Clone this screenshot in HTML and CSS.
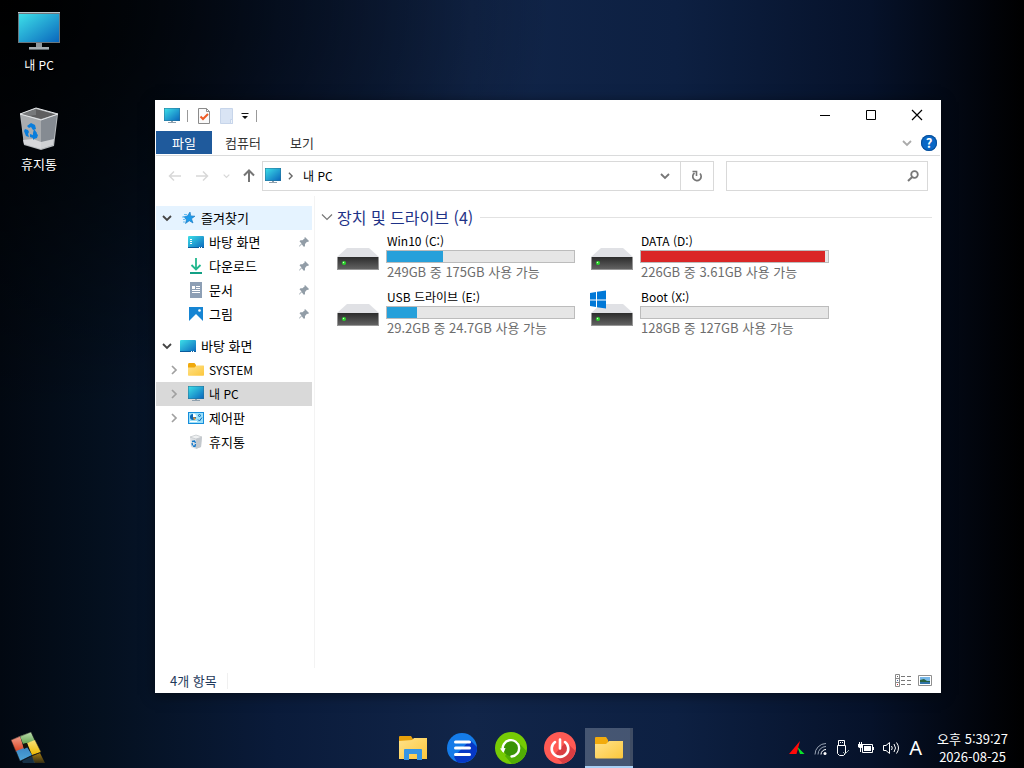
FILE: index.html
```html
<!DOCTYPE html>
<html lang="ko">
<head>
<meta charset="utf-8">
<title>내 PC</title>
<link rel="stylesheet" href="styles.css">
</head>
<body>
<svg class="defs" aria-hidden="true">
  <defs>
    <linearGradient id="screen" x1="0" y1="0" x2="1" y2="1"><stop offset="0" stop-color="#3ddfe8"/><stop offset="1" stop-color="#0a67bd"/></linearGradient>
    <linearGradient id="gold" x1="0" y1="0" x2="1" y2="1"><stop offset="0" stop-color="#ffe28a"/><stop offset="1" stop-color="#fcc73c"/></linearGradient>
    <linearGradient id="metal" x1="0" y1="0" x2="0" y2="1"><stop offset="0" stop-color="#2c2c2c"/><stop offset="1" stop-color="#626262"/></linearGradient>
    <linearGradient id="red" x1="0" y1="0" x2="0" y2="1"><stop offset="0" stop-color="#f2a08c"/><stop offset="1" stop-color="#d8401f"/></linearGradient>
    <linearGradient id="green" x1="0" y1="0" x2="0" y2="1"><stop offset="0" stop-color="#bfe0b0"/><stop offset="1" stop-color="#63a350"/></linearGradient>
    <linearGradient id="blue" x1="0" y1="0" x2="0" y2="1"><stop offset="0" stop-color="#3b86c4"/><stop offset="1" stop-color="#4fa5d8"/></linearGradient>
    <linearGradient id="yellow" x1="0" y1="0" x2="0" y2="1"><stop offset="0" stop-color="#fae27a"/><stop offset="1" stop-color="#ebb800"/></linearGradient>
    <linearGradient id="fade" x1="0" y1="0" x2="0" y2="1"><stop offset="0" stop-color="#a57c10"/><stop offset="1" stop-color="#a57c10" stop-opacity=".3"/></linearGradient>
  </defs>
  <symbol id="i-pc" viewBox="0 0 16 16"><path d="M0 0h16v13H0z" fill="#2a6f92"/><path d="M.5.5h15v12H.5z" fill="url(#screen)"/><path d="M7 13h2v2H7zM4 14h8v1H4z" fill="#8fa0ad"/></symbol>
  <symbol id="i-desk" viewBox="0 0 16 16"><path d="M0 3q0-1 1-1h14q1 0 1 1v11H1q-1 0-1-1z" fill="url(#screen)"/><path d="M0 13h16v1H0z" fill="#0a5c9c"/><path d="M11 13h1v1h-1zM13 13h1v1h-1z" fill="#fff"/></symbol>
  <symbol id="i-folder" viewBox="0 0 16 16"><path d="M0 2.500q0-1.500 1-1.500h5.500l1.500 2v3H0z" fill="#f0a90c"/><path d="M0 5.500h6.500L8.500 3.500H15.500q.5 0 .5.500v9q0 .7-.7.700H.7Q0 13.700 0 13z" fill="url(#gold)"/></symbol>
  <symbol id="i-pin" viewBox="0 0 12 12"><path d="M7 1l4 4-1 1-1-.2L7 8v2L6 11 3.700 8.300 1.500 10.500 1 11l.5-1.500L3.500 7.500 1.500 5.300l1-1h2l2.300-2L6.500 1.500z" fill="#929da7"/></symbol>
  <symbol id="i-right" viewBox="0 0 8 10"><path d="M2 1l4 4-4 4" fill="none" stroke="currentColor" stroke-width="1.700"/></symbol>
  <symbol id="i-down" viewBox="0 0 10 8"><path d="M1 2l4 4 4-4" fill="none" stroke="currentColor" stroke-width="1.800"/></symbol>
  <symbol id="i-thin" viewBox="0 0 12 8"><path d="M1 1.500l5 5 5-5" fill="none" stroke="currentColor" stroke-width="1.200"/></symbol>
  <symbol id="i-drive" viewBox="0 0 44 34"><path d="M11 11h22l10 9H1z" fill="#e0e1e5"/><path d="M1 20h42v13H1z" fill="#979797"/><path d="M2 20h40v12H2z" fill="url(#metal)"/><circle cx="8" cy="26" r="2" fill="#29d629"/><circle cx="7.500" cy="25.500" r=".7" fill="#c6ffc6"/></symbol>
  <symbol id="i-bin" viewBox="0 0 40 44"><path d="M1 7L17 1l22 6-4 32-13 4-17-5z" fill="#b6babd"/><path d="M2 7l15-5 20 5.500-15 4.500z" fill="#5f5f60"/><path d="M17 2v6L8 9 2 7z" fill="#77797b"/><path d="M2 8l20 5v29L5 37z" fill="#a9acaf"/><path d="M22 13l16-5-4 30-12 4z" fill="#858b92"/><path d="M4 33l10-1 8 3 13-3-1 6-12 4-17-5z" fill="#e2e4e6" opacity=".8"/><path d="M1 7l21 6 17-6M1 7l16-6 22 6" fill="none" stroke="#e3e5e7"/><path d="M8 19l4-3 4 2 1 4-3 1-2-3-2 1zM6 22l3 1 1 2-1 2 1 3-3-1-2-5zM11 27l3 1v-2l3 4-3 3v-2l-3-1zM15 22l3 4-1 4-3-4zM17 26l2 2-1 3-3 1z" fill="#087ddc"/></symbol>
  <symbol id="i-bin-small" viewBox="0 0 16 16"><path d="M2 3l6-2 6 2-1 10-5 2-5-2z" fill="#dde0e3"/><path d="M2 3l6 2 6-2-6-2z" fill="#eff1f2" stroke="#bcc1c5" stroke-width=".6"/><path d="M8 5l6-2-1 10-5 2z" fill="#c3c8cd"/><path d="M4 7.500l2.500-.5 1 2M4 9l.5 2.500M7.500 10l-.5 2.500-2-.5" fill="none" stroke="#1377c9" stroke-width="1.300"/></symbol>
</svg>

<main class="desktop">
  <div class="shortcuts">
    <a class="shortcut latin" href="#pc">
      <svg width="42" height="42" viewBox="0 0 42 42"><path d="M0 2h42v31H0z" fill="#6b777e"/><path d="M0 2h42v1H0z" fill="#b9c4c9"/><path d="M1 4h40v28H1z" fill="url(#screen)"/><path d="M18 33h6v4h-6z" fill="#8f979c"/><path d="M11 37h20v3H11z" fill="#a5adb2"/><path d="M11 39h20v1H11z" fill="#5d666b"/></svg>
      <span>내 PC</span>
    </a>
    <a class="shortcut" href="#bin">
      <svg width="40" height="44"><use href="#i-bin"/></svg>
      <span>휴지통</span>
    </a>
  </div>

  <section class="window" aria-label="내 PC">
    <header class="titlebar">
      <div class="quick">
        <svg width="16" height="16"><use href="#i-pc"/></svg>
        <i class="bar-sep"></i>
        <button class="spaced" aria-label="속성"><svg width="14" height="16" viewBox="0 0 14 16"><path d="M1.500.5h8l3 3v12h-11z" fill="#fafafa" stroke="#8b8b8b"/><path d="M9.500.5v3h3" fill="none" stroke="#8b8b8b"/><path d="M3.500 8.500L6 11l5-5" fill="none" stroke="#ee5a24" stroke-width="2"/></svg></button>
        <button class="spaced" aria-label="새 폴더"><svg width="14" height="16" viewBox="0 0 14 16"><path d="M.5.5h12v15H.5z" fill="#d9e4f4" stroke="#c7d5ea"/><path d="M10.500 15.500v-4h2v4z" fill="#edf3fb" stroke="#c7d5ea"/></svg></button>
        <button aria-label="사용자 지정"><svg width="8" height="8" viewBox="0 0 8 8"><path d="M.5 1h7v1h-7zM1 4h6L4 7z" fill="#111"/></svg></button>
        <i class="bar-sep"></i>
      </div>
      <div class="controls">
        <button aria-label="최소화"><svg width="12" height="12"><path d="M1 6.500h10" stroke="#000"/></svg></button>
        <button aria-label="최대화"><svg width="12" height="12"><path d="M1.500 1.500h9v9h-9z" fill="none" stroke="#000"/></svg></button>
        <button aria-label="닫기"><svg width="12" height="12"><path d="M1 1l10 10M11 1L1 11" stroke="#000" stroke-width="1.200"/></svg></button>
      </div>
    </header>

    <div class="ribbon">
      <button class="tab tab-file">파일</button>
      <button class="tab">컴퓨터</button>
      <button class="tab">보기</button>
      <div class="ribbon-end">
        <button class="muted" aria-label="리본 확장"><svg width="10" height="8"><use href="#i-down"/></svg></button>
        <button class="help" aria-label="도움말">?</button>
      </div>
    </div>

    <div class="toolbar">
      <div class="history">
        <button class="faint" aria-label="뒤로"><svg width="14" height="12" viewBox="0 0 14 12"><path d="M13 6H1.500M6 1.500L1.500 6 6 10.500" fill="none" stroke="currentColor" stroke-width="1.500"/></svg></button>
        <button class="faint" aria-label="앞으로"><svg width="14" height="12" viewBox="0 0 14 12"><path d="M1 6h11.500M8 1.500L12.500 6 8 10.500" fill="none" stroke="currentColor" stroke-width="1.500"/></svg></button>
        <button class="faint" aria-label="최근 위치"><svg width="7" height="6"><use href="#i-down"/></svg></button>
        <button class="up" aria-label="위로"><svg width="12" height="14" viewBox="0 0 12 14"><path d="M6 13V2M1 6.500l5-5 5 5" fill="none" stroke="currentColor" stroke-width="2"/></svg></button>
      </div>
      <div class="address">
        <svg width="16" height="16"><use href="#i-pc"/></svg>
        <svg class="crumb-arrow" width="7" height="8"><use href="#i-right"/></svg>
        <button class="latin">내 PC</button>
        <button class="drop" aria-label="이전 위치"><svg width="10" height="8"><use href="#i-down"/></svg></button>
        <button class="refresh" aria-label="새로 고침"><svg width="12" height="12" viewBox="0 0 12 12"><path d="M3.500 3A4.200 4.200 0 1 0 9 3.500" fill="none" stroke="currentColor" stroke-width="1.700"/><path d="M1.500 1.500H5.500V6" fill="none" stroke="currentColor" stroke-width="1.600"/></svg></button>
      </div>
      <label class="search">
        <input type="search" aria-label="내 PC 검색">
        <svg width="12" height="12" viewBox="0 0 12 12"><circle cx="7.500" cy="4.500" r="3.300" fill="none" stroke="#777" stroke-width="1.800"/><path d="M5.200 7L1 11" stroke="#777" stroke-width="2"/></svg>
      </label>
    </div>

    <div class="body">
      <nav class="tree">
        <ul>
          <li><a class="node hot" href="#fav"><svg class="open" width="10" height="8"><use href="#i-down"/></svg><svg width="16" height="16" viewBox="0 0 16 16"><path d="M10 2l.8 3.900 4.200.3-3.500 2.500 1.500 4.300-3.700-2.200L5.500 13.500 6.500 9.500 3.500 6.700l3.900-.7z" fill="#1d9bea" stroke="#1573bd" stroke-width=".6"/><path d="M4 4.500h3M2 7h3M3 9.500h2.500M3 12h2" stroke="#68bdf1"/></svg><span>즐겨찾기</span></a></li>
          <li><a class="node child" href="#desktop"><svg width="16" height="16"><use href="#i-desk"/><path d="M2 5h2v1H2zM2 7h2v1H2zM2 9h2v1H2z" fill="#fff"/></svg><span>바탕 화면</span><svg class="pin" width="12" height="12"><use href="#i-pin"/></svg></a></li>
          <li><a class="node child" href="#down"><svg width="16" height="16" viewBox="0 0 16 16"><path d="M8 0v11M3.500 7L8 11.500 12.500 7" fill="none" stroke="#22b88e" stroke-width="1.800"/><path d="M2 14h12v2H2z" fill="#12a085"/></svg><span>다운로드</span><svg class="pin" width="12" height="12"><use href="#i-pin"/></svg></a></li>
          <li><a class="node child" href="#docs"><svg width="16" height="16" viewBox="0 0 16 16"><path d="M2 0h12v16H2z" fill="#8d9fb5"/><path d="M4 4h3v3H4zM8 4h4v1H8zM8 6h4v1H8zM4 8h8v1H4zM4 10h8v1H4z" fill="#fff"/></svg><span>문서</span><svg class="pin" width="12" height="12"><use href="#i-pin"/></svg></a></li>
          <li><a class="node child" href="#pics"><svg width="16" height="16" viewBox="0 0 16 16"><path d="M1 1h14v14H1z" fill="#1685d3"/><path d="M1 15l7-7 7 7z" fill="#fff"/><circle cx="11.500" cy="4.500" r="1.300" fill="#fff"/></svg><span>그림</span><svg class="pin" width="12" height="12"><use href="#i-pin"/></svg></a></li>
        </ul>
        <ul>
          <li><a class="node" href="#root"><svg class="open" width="10" height="8"><use href="#i-down"/></svg><svg width="16" height="16"><use href="#i-desk"/></svg><span>바탕 화면</span></a></li>
          <li><a class="node sub latin" href="#system"><svg class="closed" width="8" height="10"><use href="#i-right"/></svg><svg width="16" height="16"><use href="#i-folder"/></svg><span>SYSTEM</span></a></li>
          <li><a class="node sub latin selected" href="#pc" aria-current="page"><svg class="closed" width="8" height="10"><use href="#i-right"/></svg><svg width="16" height="16"><use href="#i-pc"/></svg><span>내 PC</span></a></li>
          <li><a class="node sub" href="#control"><svg class="closed" width="8" height="10"><use href="#i-right"/></svg><svg width="16" height="16" viewBox="0 0 16 16"><path d="M0 2h16v12H0z" fill="#168ddb"/><path d="M1 3h14v10H1z" fill="#9be0fa"/><circle cx="5" cy="7" r="3" fill="#0c67b5"/><path d="M5 7V3.500A3.500 3.500 0 0 1 8.500 7z" fill="#fff"/><path d="M2 11h7v1H2z" fill="#fff"/><path d="M5 7l3 1-2 2.500z" fill="#f19525"/><circle cx="11.500" cy="5.500" r="1" fill="none" stroke="#0c67b5"/><path d="M10 9.500l1.500 1.500L14 7.500" fill="none" stroke="#0c67b5"/></svg><span>제어판</span></a></li>
          <li><a class="node child" href="#bin"><svg width="16" height="16"><use href="#i-bin-small"/></svg><span>휴지통</span></a></li>
        </ul>
      </nav>

      <section class="content">
        <h2 class="group"><svg width="12" height="8"><use href="#i-thin"/></svg><span>장치 및 드라이브 (4)</span><i></i></h2>
        <div class="drives">
          <article class="drive">
            <svg width="44" height="34"><use href="#i-drive"/></svg>
            <div><h3>Win10 (C:)</h3><div class="gauge"><b style="width:30%"></b></div><p>249GB 중 175GB 사용 가능</p></div>
          </article>
          <article class="drive">
            <svg width="44" height="34"><use href="#i-drive"/></svg>
            <div><h3>DATA (D:)</h3><div class="gauge full"><b style="width:98.400%"></b></div><p>226GB 중 3.61GB 사용 가능</p></div>
          </article>
          <article class="drive">
            <svg width="44" height="34"><use href="#i-drive"/></svg>
            <div><h3>USB 드라이브 (E:)</h3><div class="gauge"><b style="width:16%"></b></div><p>29.2GB 중 24.7GB 사용 가능</p></div>
          </article>
          <article class="drive">
            <svg width="44" height="34" viewBox="0 0 44 34"><use href="#i-drive" width="44" height="34"/><path d="M0 0l6-1v7.500H0zM7-1.200L16-2.500v9H7zM0 7.500h6V14l-6-1zM7 7.500h9v8L7 14.200z" fill="#0078d7"/></svg>
            <div><h3>Boot (X:)</h3><div class="gauge"><b style="width:0%"></b></div><p>128GB 중 127GB 사용 가능</p></div>
          </article>
        </div>
      </section>
    </div>

    <footer class="status">
      <span class="count">4개 항목</span>
      <div class="views">
        <button aria-label="자세히"><svg width="16" height="13" viewBox="0 0 16 13"><path d="M.5.5h4v12h-4zM.5 4.500h4M.5 8.500h4" fill="none" stroke="#8a8a8a"/><path d="M2 2h1v1H2z" fill="#666"/><path d="M2 6h1v1H2z" fill="#46a"/><path d="M2 10h1v1H2z" fill="#c33"/><path d="M6 2.500h10M6 6.500h10M6 10.500h10" stroke="#777" stroke-dasharray="4 2"/></svg></button>
        <button aria-label="큰 아이콘"><svg width="14" height="11" viewBox="0 0 14 11"><path d="M.5.5h13v10H.5z" fill="#fff" stroke="#8f8f8f"/><path d="M2 2h10v7H2z" fill="#77b7e8"/><path d="M2 5l4-1 3 2h3v1H2z" fill="#28613f"/><path d="M2 7h10v2H2z" fill="#2f72a7"/></svg></button>
      </div>
    </footer>
  </section>
</main>

<footer class="taskbar">
  <button class="start" aria-label="시작">
    <svg width="36" height="34" viewBox="0 0 36 34"><path d="M1 9L10 5l4 13-8 3z" fill="url(#red)"/><path d="M10 5L21 1l4 9-12 3z" fill="url(#green)"/><path d="M17 12l8-3 6 12-9 3z" fill="url(#yellow)"/><path d="M6 20l11-4 5 8-12 6z" fill="url(#blue)"/><path d="M13 13l4-1 1 4-4 2z" fill="#16140a"/><path d="M22 25l8-3 5 10H24z" fill="url(#fade)"/><path d="M12 30l10-5 3 7H13z" fill="#244a68" opacity=".6"/><path d="M1 9L21 1l10 20-21 9z" fill="none" stroke="#222" stroke-opacity=".5"/></svg>
  </button>
  <div class="apps">
    <button class="app" aria-label="파일 탐색기"><svg width="28" height="26" viewBox="0 0 28 26"><path d="M0 2q0-1 1-1h11l2 3v5H0z" fill="#e6a00b"/><path d="M0 6l13-1 2-2h13v21H0z" fill="url(#gold)"/><path d="M5 15q0-1 1-1h16q1 0 1 1v10h-5v-6h-8v6H5z" fill="#3595e5"/></svg></button>
    <button class="app" aria-label="메뉴"><svg width="30" height="30" viewBox="0 0 30 30"><circle cx="15" cy="15" r="15" fill="#147be8"/><path d="M23 7l7 7a15 15 0 0 1-20 15L7 24z" fill="#0637c5"/><path d="M8.500 9h14M8.500 15h14M8.500 21.500h14" stroke="#fff" stroke-width="3" stroke-linecap="round"/></svg></button>
    <button class="app" aria-label="다시 시작"><svg width="32" height="32" viewBox="0 0 32 32"><circle cx="16" cy="16" r="16" fill="#76cb05"/><path d="M22 9l9.500 10A16 16 0 0 1 17 32l-7-8z" fill="#51ad05"/><circle cx="16" cy="16" r="8" fill="#3a9405"/><path d="M8 18.500A8.200 8.200 0 1 1 16.500 24.500" fill="none" stroke="#fff" stroke-width="2.400" stroke-linecap="round"/><path d="M5 16.500l5.500-.5-2 5z" fill="#fff"/></svg></button>
    <button class="app" aria-label="전원"><svg width="32" height="32" viewBox="0 0 32 32"><circle cx="16" cy="16" r="16" fill="#ff5a54"/><path d="M22 10l9.500 9A16 16 0 0 1 19 31.500L10 23z" fill="#d93d42"/><path d="M11 10a8.300 8.300 0 1 0 10 0M16 7.500v9" fill="none" stroke="#fff" stroke-width="2.600" stroke-linecap="round"/></svg></button>
    <button class="app active" aria-label="내 PC"><svg width="28" height="24" viewBox="0 0 28 24"><path d="M0 2q0-1 1-1h10l2 3v5H0z" fill="#f2ab0d"/><path d="M0 8h11l3-3h14v16q0 1.500-1.500 1.500h-25Q0 22.500 0 21z" fill="url(#gold)"/></svg></button>
  </div>
  <div class="tray">
    <button aria-label="알림"><svg width="16" height="14" viewBox="0 0 16 14"><path d="M0 13L11 0 7.500 13z" fill="#ff0909"/><path d="M8.500 6l7 7H11z" fill="#09e529"/></svg></button>
    <button aria-label="네트워크"><svg width="13" height="13" viewBox="0 0 13 13"><circle cx="11" cy="11.500" r="1.500" fill="#fff"/><path d="M7 12.500A5 5 0 0 1 12 7.500" fill="none" stroke="#fff"/><path d="M4 12.500A8 8 0 0 1 12 4.500M1 12.500A11 11 0 0 1 12 1.500" fill="none" stroke="#9aa5b5"/></svg></button>
    <button aria-label="USB"><svg width="13" height="16" viewBox="0 0 13 16"><path d="M2.500 5V.5h6V5M1.500 5.500h8v8l-2 2h-4l-2-2z" fill="none" stroke="#fff"/><path d="M4 2h1v1H4zM6 2h1v1H6z" fill="#fff"/><path d="M7 12l2 2 4-4" fill="none" stroke="#9aa"/></svg></button>
    <button aria-label="배터리"><svg width="16" height="12" viewBox="0 0 16 12"><path d="M4.500 2.500h10v8h-10z" fill="none" stroke="#fff"/><path d="M6 4h7v5H6zM15 5h1v3h-1z" fill="#fff"/><path d="M0 2h5v3L3.500 6h-2L0 5zM1 0h1v2H1zM3 0h1v2H3zM2 6h1v4H2z" fill="#fff"/></svg></button>
    <button aria-label="볼륨"><svg width="17" height="14" viewBox="0 0 17 14"><path d="M.5 4.500H3L6.500 1.500v11L3 9.500H.5z" fill="none" stroke="#fff"/><path d="M8.500 5q1.500 2 0 4M11 3q3 4 0 8M13.500 1.500q4 5.500 0 11" fill="none" stroke="#fff"/></svg></button>
    <button class="ime" aria-label="영문 입력">A</button>
    <div class="clock"><time>오후 5:39:27</time><time datetime="2026-08-25">2026-08-25</time></div>
  </div>
</footer>
</body>
</html>
```
FILE: styles.css
```css
* { box-sizing: border-box; }

body {
  margin: 0;
  min-height: 100vh;
  display: flex;
  flex-direction: column;
  font: 13px/16px "Noto Sans CJK KR", sans-serif;
  color: #000;
  background:
    radial-gradient(ellipse at 0 0, #000 0%, transparent 38%),
    linear-gradient(90deg, #020811 0%, #04101f 10%, #0a1b3a 27%, #112549 46%, #0d2042 66%, #06122a 85%, #010308 97%, #000 100%);
}

.defs { position: absolute; width: 0; height: 0; }
svg { display: block; flex: none; }
button { border: 0; padding: 0; background: none; font: inherit; color: inherit; }
a { color: inherit; text-decoration: none; }
ul { list-style: none; margin: 0; padding: 0; }
h2, h3, p { margin: 0; font: inherit; }
.latin { font-size: 12px; }

.desktop { position: relative; flex: 1; }

.shortcuts { display: flex; flex-direction: column; gap: 34px; width: 78px; padding-top: 10px; }
.shortcut { display: flex; flex-direction: column; align-items: center; gap: 5px; color: #fff; text-shadow: 1px 1px 1px #000; }

.window {
  position: absolute;
  inset: 100px 83px 35px 155px;
  display: flex;
  flex-direction: column;
  padding: 0 1px;
  background: #fff;
  box-shadow: 0 2px 12px rgba(0, 0, 0, .5);
}

.titlebar { display: flex; justify-content: space-between; height: 31px; }
.quick { display: flex; align-items: center; gap: 7px; padding-left: 8px; }
.spaced { margin-left: 2px; }
.bar-sep { width: 1px; height: 12px; background: #999; }
.controls { display: flex; height: 30px; }
.controls button { display: grid; place-items: center; width: 46px; }

.ribbon { display: flex; height: 25px; border-bottom: 1px solid #dadbdc; color: #333; }
.tab { width: 62px; margin-bottom: 1px; }
.tab:nth-child(3) { width: 56px; }
.tab-file { width: 56px; background: #1f5a9c; color: #fff; }
.ribbon-end { display: flex; align-items: center; gap: 9px; margin-left: auto; padding-right: 3px; }
.muted { color: #aaa; }
.help { width: 16px; height: 16px; border-radius: 50%; background: #0a68c6; box-shadow: inset 0 0 0 1px #0a4f99; color: #fff; font-weight: 700; line-height: 16px; }

.toolbar { display: flex; align-items: center; height: 40px; padding-right: 12px; }
.history { display: flex; align-items: center; justify-content: space-between; width: 106px; padding: 0 7px 0 12px; }
.faint { color: #d8d8d8; }
.up { color: #757575; }
.address { display: flex; flex: 1; align-items: center; height: 30px; border: 1px solid #d9d9d9; padding-left: 2px; }
.crumb-arrow { margin: 0 9px 0 6px; color: #666; }
.drop { margin-left: auto; padding: 0 10px; color: #767676; }
.refresh { display: grid; place-items: center; align-self: stretch; width: 33px; border-left: 1px solid #d9d9d9; color: #777; }
.search { display: flex; align-items: center; width: 202px; height: 30px; margin-left: 12px; padding-right: 8px; border: 1px solid #d9d9d9; }
.search input { flex: 1; min-width: 0; border: 0; outline: 0; background: none; font: inherit; }

.body { display: flex; flex: 1; min-height: 0; }
.tree { width: 159px; padding: 10px 2px 0 0; border-right: 1px solid #f3f3f3; }
.tree ul + ul { margin-top: 8px; }
.node { display: flex; align-items: center; gap: 5px; height: 24px; padding: 0 2px 0 6px; }
.child { padding-left: 32px; }
.sub { padding-left: 14px; }
.hot { background: #e5f3ff; }
.selected { background: #d9d9d9; }
.open { margin-right: 3px; color: #444; }
.closed { margin-right: 5px; color: #a0a0a0; }
.pin { margin-left: auto; }

.content { flex: 1; padding: 9px 8px 0 6px; }
.group { display: flex; align-items: center; height: 24px; font-size: 16px; color: #1e3287; }
.group svg { margin-right: 4px; color: #777; }
.group i { flex: 1; height: 1px; margin-left: 7px; background: #e2e2e2; }
.drives { display: flex; flex-wrap: wrap; gap: 9px 15px; padding: 4px 0 0 15px; }
.drive { display: flex; gap: 6px; width: 239px; }
.drive svg { margin-top: 4px; overflow: visible; }
.drive > div { flex: 1; }
.drive h3, .drive p { padding-left: 1px; }
.drive h3 { font-size: 12px; }
.drive p { color: #6d6d6d; }
.gauge { height: 13px; margin: 1px 0; border: 1px solid #bcbcbc; background: #e6e6e6; }
.gauge b { display: block; height: 100%; background: #26a0da; }
.full b { background: #da2626; }

.status { display: flex; align-items: center; justify-content: space-between; height: 25px; padding: 0 8px 0 14px; color: #1e395b; }
.count { padding-right: 10px; border-right: 1px solid #f0f0f0; }
.views { display: flex; align-items: center; gap: 7px; }

.taskbar { display: grid; grid-template-columns: 1fr auto 1fr; height: 40px; padding-right: 2px; color: #fff; }
.start { justify-self: start; margin-left: 10px; }
.apps { display: flex; gap: 1px; }
.app { display: grid; place-items: center; width: 48px; }
.active { background: rgba(160, 170, 190, .38); box-shadow: inset 0 -2px #a9d0f5, inset -3px 0 rgba(60, 70, 90, .6); }
.tray { display: flex; align-items: center; justify-self: end; gap: 9px; padding-right: 14px; }
.ime { font: 20px/24px "Noto Sans", sans-serif; }
.clock { display: flex; flex-direction: column; align-items: center; gap: 2px; margin-left: 6px; }
```
